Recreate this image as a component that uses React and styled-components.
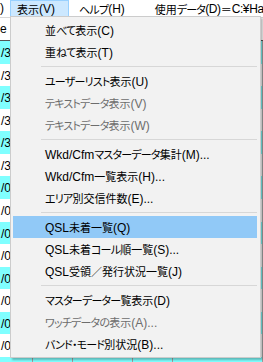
import React from 'react';
import styled, { createGlobalStyle } from 'styled-components';

const Global = createGlobalStyle`
  html, body { margin: 0; padding: 0; background: #fff; }
  body {
    font-family: "Liberation Sans", "Noto Sans CJK JP", sans-serif;
  }
`;

const Screen = styled.div`
  position: relative;
  width: 263px;
  height: 362px;
  overflow: hidden;
  background: #fff;
  font-size: 12px;
  color: #000;
`;

// 日本語部分だけ少し小さく、カナは詰める
const Jp = styled.span`
  font-family: "Noto Sans CJK JP", sans-serif;
  font-size: 11px;
  font-feature-settings: "palt";
  letter-spacing: ${p => (p.$kana ? '-0.8px' : '0')};
`;

const jp = s =>
  s.split(/([\u3040-\u30ff]+|[\u3000-\u303f\u4e00-\u9fff\uff00-\uffef]+)/g).map((part, i) => {
    if (!part) return null;
    if (/^[\u3040-\u30ff]+$/.test(part)) return <Jp key={i} $kana>{part}</Jp>;
    if (/^[\u3000-\u303f\u4e00-\u9fff\uff00-\uffef]+$/.test(part)) return <Jp key={i}>{part}</Jp>;
    return part;
  });

const MenuBar = styled.div`
  display: flex;
  align-items: stretch;
  height: 17px;
  border-bottom: 1px solid #d9d9d9;
  background: #fff;
  white-space: nowrap;
  overflow: hidden;
`;

const BarItem = styled.div`
  flex: none;
  display: flex;
  align-items: center;
  box-sizing: border-box;
  height: 17px;
  padding: 0 ${p => p.$right ?? 7}px 0 ${p => p.$left ?? 7}px;
  line-height: 17px;
  letter-spacing: ${p => (p.$tight ? '-0.4px' : '0')};
  background: ${p => (p.$open ? '#cce8ff' : 'transparent')};
  border: 1px solid ${p => (p.$open ? '#99d1ff' : 'transparent')};
  border-bottom: none;
`;

const Cut = styled.div`
  flex: none;
  width: 4px;
  margin-right: 6px;
  display: flex;
  justify-content: flex-end;
  overflow: hidden;
  line-height: 17px;
`;

const Grid = styled.div`
  display: flex;
  flex-direction: column;
`;

const HeadRow = styled.div`
  flex: none;
  height: 22px;
  line-height: 22px;
  border-bottom: 1px solid #555;
  overflow: hidden;
  white-space: nowrap;
`;

const Row = styled.div`
  flex: none;
  display: flex;
  height: 22.57px;
  line-height: 24px;
  background: ${p => (p.$cyan ? '#80ffff' : '#fff')};
  white-space: nowrap;
  overflow: hidden;
`;

const Cell = styled.div`
  flex: none;
  width: ${p => p.$w}px;
  padding-left: 1px;
  box-sizing: border-box;
  border-right: 1px solid #a0a0a0;
  overflow: hidden;
`;

const Dropdown = styled.div`
  position: absolute;
  left: 10px;
  top: 16px;
  width: 251px;
  box-sizing: border-box;
  padding: 2px;
  background: #f2f2f2;
  border: 1px solid #cccccc;
  box-shadow: 2px 2px 2px rgba(0, 0, 0, 0.28);
`;

const Item = styled.div`
  height: 22px;
  line-height: 22px;
  padding-left: 32px;
  margin-right: 1px;
  color: ${p => (p.$disabled ? '#6d6d6d' : '#000')};
  background: ${p => (p.$active ? '#91c9f7' : 'transparent')};
  white-space: nowrap;
`;

const Sep = styled.div`
  height: 7px;
  display: flex;
  align-items: center;
  padding-left: 28px;
  padding-right: 1px;
  &::after {
    content: '';
    flex: 1;
    height: 1px;
    background: #d7d7d7;
  }
`;

const menu = [
  { t: '並べて表示(C)' },
  { t: '重ねて表示(T)' },
  'sep',
  { t: 'ユーザーリスト表示(U)' },
  { t: 'テキストデータ表示(V)', d: true },
  { t: 'テキストデータ表示(W)', d: true },
  'sep',
  { t: 'Wkd/Cfmマスターデータ集計(M)...' },
  { t: 'Wkd/Cfm一覧表示(H)...' },
  { t: 'エリア別交信件数(E)...' },
  'sep',
  { t: 'QSL未着一覧(Q)', a: true },
  { t: 'QSL未着コール順一覧(S)...' },
  { t: 'QSL受領／発行状況一覧(J)' },
  'sep',
  { t: 'マスターデーター覧表示(D)' },
  { t: 'ワッチデータの表示(A)...', d: true },
  { t: 'バンド・モード別状況(B)...' },
];

const rows = Array.from({ length: 15 }, (_, i) => (i < 6 ? '/3' : '/0'));

export default function App() {
  return (
    <Screen>
      <Global />
      <MenuBar>
        <Cut>(F)</Cut>
        <BarItem $open $left={6} $right={13}>{jp('表示(V)')}</BarItem>
        <BarItem $left={9} $right={14}>{jp('ヘルプ(H)')}</BarItem>
        <BarItem $left={14} $tight>{jp('使用データ(D)＝C:¥Hamlog')}</BarItem>
      </MenuBar>
      <Grid>
        <HeadRow>e</HeadRow>
        {rows.map((r, i) => (
          <Row key={i} $cyan={i % 2 === 0}>
            <Cell $w={33}>{r}1/01</Cell>
            <Cell $w={40}>11:00J</Cell>
            <Cell $w={60}>JA1ABC</Cell>
            <Cell $w={40}>599</Cell>
            <Cell $w={90}>7MHz SSB</Cell>
          </Row>
        ))}
      </Grid>
      <Dropdown>
        {menu.map((m, i) =>
          m === 'sep' ? (
            <Sep key={i} />
          ) : (
            <Item key={i} $disabled={m.d} $active={m.a}>
              {jp(m.t)}
            </Item>
          )
        )}
      </Dropdown>
    </Screen>
  );
}
